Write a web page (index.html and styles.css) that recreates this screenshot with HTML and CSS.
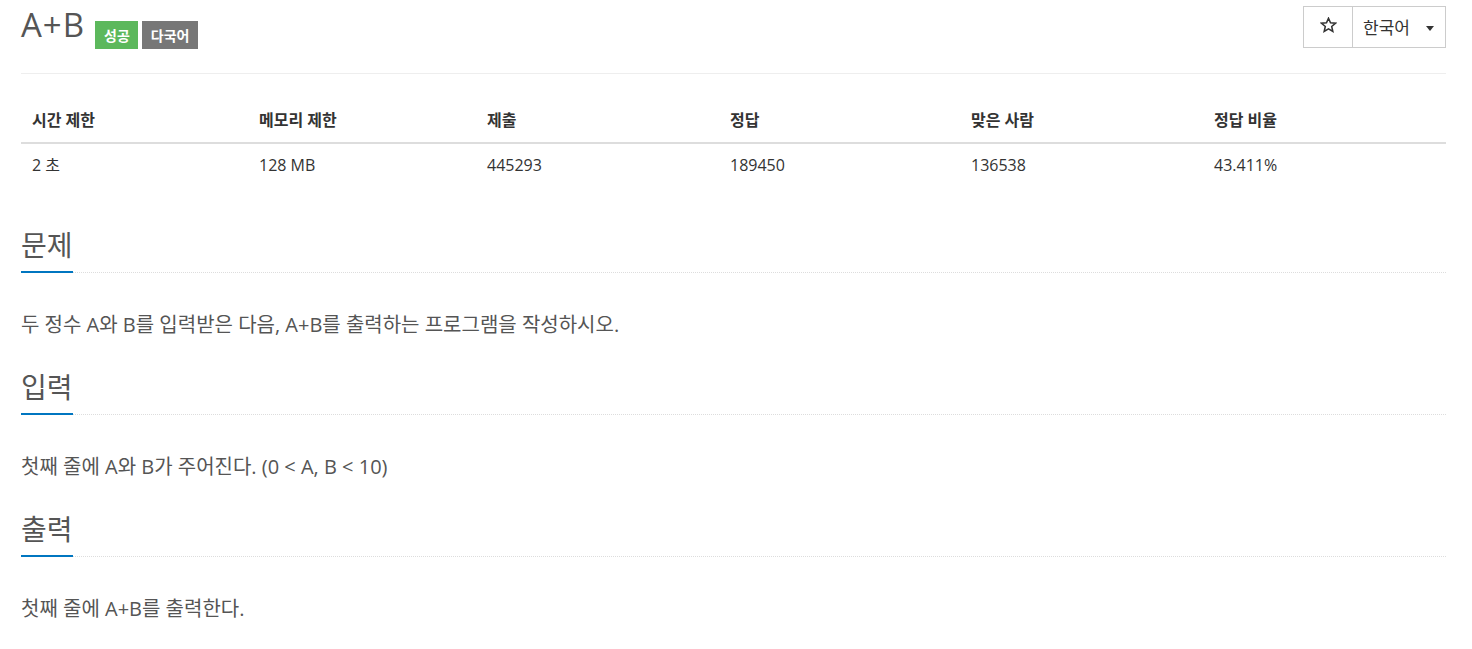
FILE: index.html
```html
<!DOCTYPE html>
<html lang="ko">
<head>
<meta charset="utf-8">
<title>A+B</title>
<link rel="stylesheet" href="styles.css">
</head>
<body>
<div class="page">
  <div class="page-header">
    <div class="title-wrap">
      <h1 class="title">A+B</h1>
      <span class="label label-success">성공</span>
      <span class="label label-default">다국어</span>
    </div>
    <div class="btn-group">
      <button class="btn btn-star" type="button" aria-label="즐겨찾기">
        <svg width="17" height="16" viewBox="0 0 24 23" aria-hidden="true">
          <path d="M12 1.8l2.9 6.6 7.1.6-5.4 4.7 1.6 7-6.2-3.7-6.2 3.7 1.6-7L2 9l7.1-.6z" fill="none" stroke="#333" stroke-width="2.2" stroke-linejoin="miter"/>
        </svg>
      </button>
      <button class="btn btn-lang" type="button">한국어<span class="caret"></span></button>
    </div>
  </div>

  <table class="stats">
    <colgroup>
      <col class="c1"><col class="c2"><col class="c3"><col class="c4"><col class="c5"><col class="c6">
    </colgroup>
    <thead>
      <tr><th>시간 제한</th><th>메모리 제한</th><th>제출</th><th>정답</th><th>맞은 사람</th><th>정답 비율</th></tr>
    </thead>
    <tbody>
      <tr><td>2 초</td><td>128 MB</td><td>445293</td><td>189450</td><td>136538</td><td>43.411%</td></tr>
    </tbody>
  </table>

  <section class="problem-section">
    <div class="headline"><h2><span>문제</span></h2></div>
    <p>두 정수 A와 B를 입력받은 다음, A+B를 출력하는 프로그램을 작성하시오.</p>
  </section>

  <section class="problem-section">
    <div class="headline"><h2><span>입력</span></h2></div>
    <p>첫째 줄에 A와 B가 주어진다. (0 &lt; A, B &lt; 10)</p>
  </section>

  <section class="problem-section">
    <div class="headline"><h2><span>출력</span></h2></div>
    <p>첫째 줄에 A+B를 출력한다.</p>
  </section>
</div>
</body>
</html>
```

FILE: styles.css
```css
* { box-sizing: border-box; }

html, body {
  margin: 0;
  padding: 0;
  background: #fff;
}

body {
  font-family: "Open Sans", "Noto Sans CJK KR", sans-serif;
  color: #333;
  font-size: 16px;
  line-height: 1.42857;
}

.page {
  width: 1425px;
  margin-left: 21px;
}

/* header */
.page-header {
  display: flex;
  justify-content: space-between;
  align-items: flex-start;
  height: 74px;
  border-bottom: 1px solid #eee;
}

.title-wrap {
  display: flex;
  align-items: flex-start;
}

.title {
  margin: 7px 0 0 0;
  font-size: 33px;
  font-weight: 400;
  line-height: 36px;
  color: #555;
  letter-spacing: 1px;
}

.label {
  display: inline-block;
  margin-top: 21px;
  height: 28px;
  line-height: 28px;
  padding: 0 8px 0 9px;
  font-size: 14px;
  font-weight: 700;
  color: #fff;
  font-family: "Noto Sans CJK KR", sans-serif;
}

.label-success {
  background: #5cb85c;
  margin-left: 10px;
}

.label-default {
  background: #777;
  margin-left: 4px;
  padding: 0 9px;
}

.btn-group {
  display: flex;
  margin-top: 6px;
}

.btn {
  height: 42px;
  background: #fff;
  border: 1px solid #ccc;
  color: #333;
  font-family: "Open Sans", "Noto Sans CJK KR", sans-serif;
  font-size: 17px;
  padding: 0;
  display: flex;
  align-items: center;
  cursor: pointer;
}

.btn-star {
  width: 50px;
  justify-content: center;
  padding-bottom: 5px;
}

.btn-lang {
  width: 94px;
  margin-left: -1px;
  padding-left: 10px;
  padding-bottom: 1px;
}

.caret {
  display: inline-block;
  width: 0;
  height: 0;
  margin-left: 16px;
  margin-top: 3px;
  border-top: 5px solid #333;
  border-left: 4px solid transparent;
  border-right: 4px solid transparent;
}

/* stats table */
.stats {
  width: 1425px;
  margin-top: 24px;
  border-collapse: collapse;
  table-layout: fixed;
  font-size: 16px;
}

.stats .c1 { width: 227px; }
.stats .c2 { width: 228px; }
.stats .c3 { width: 243px; }
.stats .c4 { width: 241px; }
.stats .c5 { width: 243px; }
.stats .c6 { width: 243px; }

.stats th {
  text-align: left;
  font-weight: 700;
  padding: 10px 11px;
  line-height: 24px;
  border-bottom: 2px solid #ddd;
  color: #333;
}

.stats td {
  padding: 9px 11px 11px;
  line-height: 24px;
  color: #333;
}

/* sections */
.problem-section {
  margin-top: 39px;
}

.problem-section + .problem-section {
  margin-top: 30px;
}

.headline {
  display: flex;
  border-bottom: 1px dotted #ddd;
}

.headline h2 {
  margin: 0;
  font-size: 28px;
  font-weight: 400;
  line-height: 36px;
  color: #555;
  display: flex;
}

.headline h2 span {
  display: block;
  padding-bottom: 8px;
  border-bottom: 2px solid #0076c0;
  margin-bottom: -1px;
}

.problem-section p {
  margin: 38px 0 0 0;
  font-size: 20px;
  line-height: 28px;
  color: #555;
}
```
